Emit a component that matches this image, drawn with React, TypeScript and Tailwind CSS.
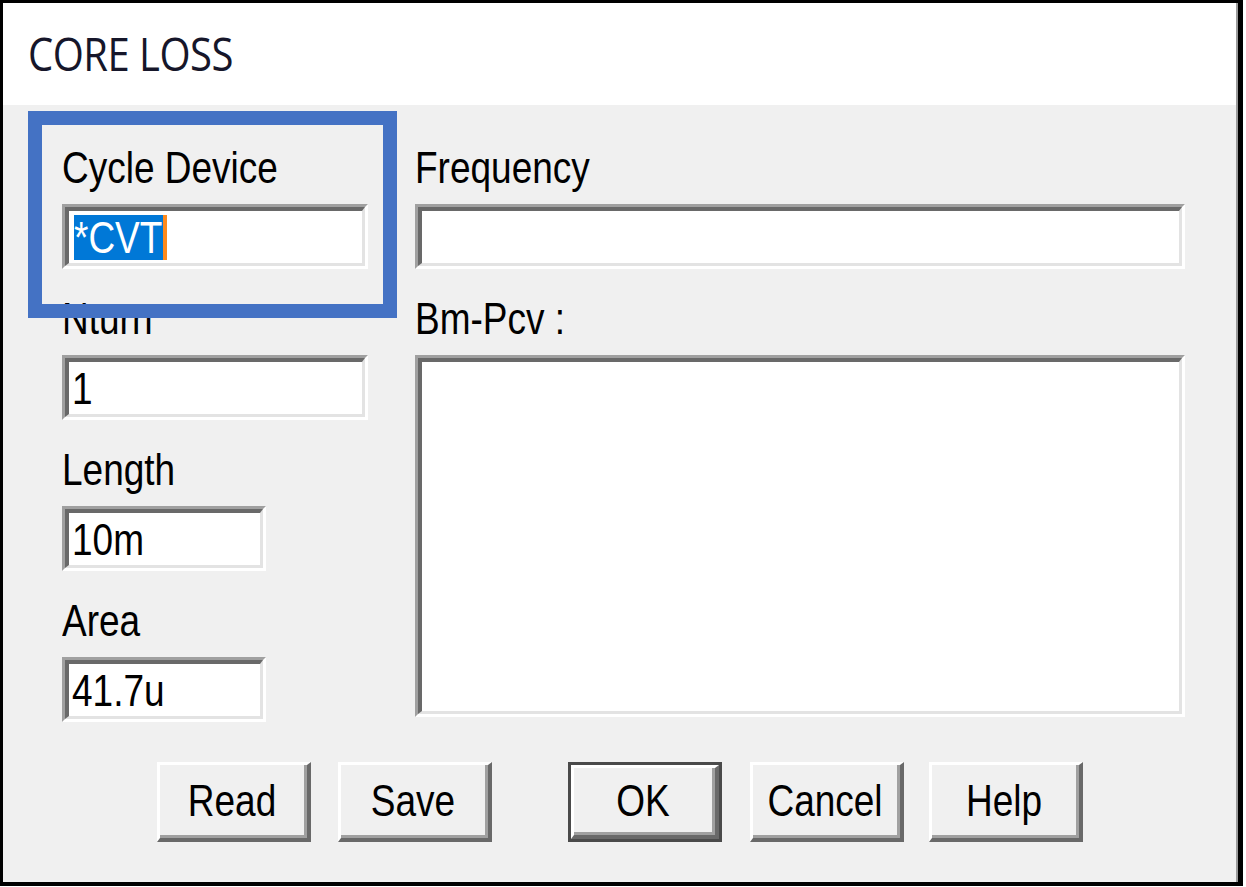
import React from "react";

const font = "font-['Liberation_Sans',Arial,sans-serif] text-[37px] leading-[45px] text-black";

// the dialog was captured stretched, so glyphs are a bit taller than Arial's
function Txt({ children, className = "" }: { children: React.ReactNode; className?: string }) {
  return <span className={`${font} inline-block whitespace-nowrap scale-y-[1.22] ${className}`}>{children}</span>;
}

// sunken 3D edit box, classic win32 look scaled up
function Field({ className = "", children }: { className?: string; children?: React.ReactNode }) {
  return (
    <div className={`border-t-[3px] border-l-[3px] border-b-[3px] border-r-[3px] border-t-[#a0a0a0] border-l-[#a0a0a0] border-b-white border-r-white ${className}`}>
      <div className="w-full h-full border-t-[4px] border-l-[4px] border-b-[3px] border-r-[3px] border-t-[#696969] border-l-[#696969] border-b-[#e3e3e3] border-r-[#e3e3e3] bg-white flex items-center pl-[3px]">
        {children}
      </div>
    </div>
  );
}

function Label({ children }: { children: React.ReactNode }) {
  return (
    <div className="h-[45px]">
      <Txt>{children}</Txt>
    </div>
  );
}

function Btn({ label, primary = false, className = "" }: { label: string; primary?: boolean; className?: string }) {
  return (
    <div className={`w-[154px] h-[80px] ${primary ? "border-[3px] border-[#4a4a4a]" : ""} ${className}`}>
      <div className="w-full h-full border-t-[3px] border-l-[3px] border-b-[4px] border-r-[4px] border-t-white border-l-white border-b-[#696969] border-r-[#696969]">
        <div className="w-full h-full border-b-[3px] border-r-[3px] border-b-[#a0a0a0] border-r-[#a0a0a0] bg-[#f0f0f0] flex items-center justify-center">
          <Txt>{label}</Txt>
        </div>
      </div>
    </div>
  );
}

export default function App() {
  return (
    <div className="w-[1246px] h-[887px] bg-white">
      <div className="w-[1243px] h-[886px] border-l-[3px] border-t-[3px] border-r-[5px] border-b-[4px] border-black flex flex-col">
        {/* title bar */}
        <div className="h-[102px] bg-white flex items-center pl-[25px] shrink-0 border-r-[2px] border-[#9a9a9a]">
          <span className="font-['Open_Sans','Noto_Sans',sans-serif] text-[40px] leading-[50px] text-[#16162a] tracking-[-0.5px] inline-block scale-y-[1.14]">
            CORE LOSS
          </span>
        </div>

        {/* body */}
        <div className="relative flex-1 bg-[#f0f0f0] pt-[40px] border-r-[2px] border-[#9a9a9a]">
          <div className="flex pl-[59px]">
            <div className="w-[306px] flex flex-col">
              <Label>Cycle Device</Label>
              <Field className="mt-[14px] w-[306px] h-[65px]">
                <span className="ml-[2px] h-[45px] flex items-center bg-[#0078d7] pr-[1px] border-r-[4px] border-[#ff8a1c]">
                  <Txt className="text-white">*CVT</Txt>
                </span>
              </Field>

              <div className="mt-[27px]">
                <Label>Nturn</Label>
              </div>
              <Field className="mt-[14px] w-[306px] h-[65px]">
                <Txt>1</Txt>
              </Field>

              <div className="mt-[27px]">
                <Label>Length</Label>
              </div>
              <Field className="mt-[14px] w-[204px] h-[65px]">
                <Txt>10m</Txt>
              </Field>

              <div className="mt-[27px]">
                <Label>Area</Label>
              </div>
              <Field className="mt-[14px] w-[204px] h-[65px]">
                <Txt>41.7u</Txt>
              </Field>
            </div>

            <div className="ml-[47px] w-[770px] flex flex-col">
              <Label>Frequency</Label>
              <Field className="mt-[14px] w-[770px] h-[65px]" />
              <div className="mt-[27px]">
                <Label>Bm-Pcv :</Label>
              </div>
              <Field className="mt-[14px] w-[770px] h-[362px]" />
            </div>
          </div>

          {/* buttons */}
          <div className="flex mt-[40px] pl-[154px]">
            <Btn label="Read" />
            <Btn label="Save" className="ml-[27px]" />
            <Btn label="OK" primary className="ml-[76px]" />
            <Btn label="Cancel" className="ml-[28px]" />
            <Btn label="Help" className="ml-[25px]" />
          </div>

          {/* highlight annotation */}
          <div className="absolute left-[25px] top-[6px] w-[369px] h-[207px] border-[14px] border-[#4472c4] pointer-events-none" />
        </div>
      </div>
    </div>
  );
}
